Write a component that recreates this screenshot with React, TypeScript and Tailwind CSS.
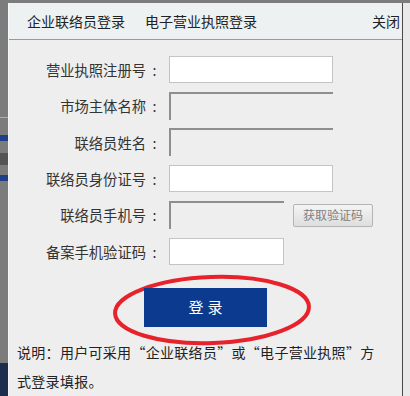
import React from "react";

const font = { fontFamily: '"Noto Sans CJK SC", "Noto Sans", sans-serif' };

function Label({ children }: { children: React.ReactNode }) {
  return (
    <div className="w-[154px] shrink-0 flex justify-end items-center text-[14.3px] text-[#333]">
      <span>{children}</span>
      <span className="w-[17px] text-center">:</span>
    </div>
  );
}

function TextInput({ w }: { w: string }) {
  return <div className={`h-[27px] ${w} bg-white border border-[#c4c4c4]`} />;
}

function DisabledInput({ w }: { w: string }) {
  return (
    <div
      className={`h-[28px] ${w} bg-[#eeeeee] border-t-2 border-l-2 border-r-0 border-b-0 border-[#8e8e8e]`}
    />
  );
}

export default function App() {
  return (
    <div className="w-[410px] h-[396px] bg-[#7c7c7c] flex flex-col overflow-hidden" style={font}>
      <div className="h-[3px] shrink-0 bg-[#7c7c7c]" />
      <div className="flex flex-1 min-h-0">
        {/* background strip */}
        <div className="w-[8px] shrink-0 flex flex-col bg-[#7c7c7c]">
          <div className="h-[106px]" />
          <div className="h-[9px] border-b border-[#9fb0d0]" />
          <div className="h-[17px]" />
          <div className="h-[6px] bg-[#1f3f8a]" />
          <div className="h-[12px]" />
          <div className="h-[12px] bg-[#3a3a3a] opacity-60" />
          <div className="h-[10px]" />
          <div className="h-[6px] bg-[#1f3f8a]" />
          <div className="flex-1" />
          <div className="h-[33px] bg-[#1d2d4d]" />
        </div>
        {/* dialog */}
        <div className="w-[395px] shrink-0 flex flex-col bg-[#eeeeee] border-l border-l-[#f8f8f8] border-r border-r-[#4a4a4a]">
          <div className="h-[37px] shrink-0 flex items-center bg-[#eef1f1] border-b border-b-[#9a9a9a] pl-[18px] pr-[2px] text-[14px] text-[#222]">
            <span>企业联络员登录</span>
            <span className="ml-[20px]">电子营业执照登录</span>
            <span className="ml-auto">关闭</span>
          </div>
          <div className="flex flex-col pt-[16px] gap-[9.4px]">
            <div className="flex items-center h-[27px]">
              <Label>营业执照注册号</Label>
              <div className="w-[6px]" />
              <TextInput w="w-[164px]" />
            </div>
            <div className="flex items-center h-[27px]">
              <Label>市场主体名称</Label>
              <div className="w-[6px]" />
              <DisabledInput w="w-[164px]" />
            </div>
            <div className="flex items-center h-[27px]">
              <Label>联络员姓名</Label>
              <div className="w-[6px]" />
              <DisabledInput w="w-[164px]" />
            </div>
            <div className="flex items-center h-[27px]">
              <Label>联络员身份证号</Label>
              <div className="w-[6px]" />
              <TextInput w="w-[164px]" />
            </div>
            <div className="flex items-center h-[27px]">
              <Label>联络员手机号</Label>
              <div className="w-[6px]" />
              <DisabledInput w="w-[115px]" />
              <div className="ml-[9px] w-[80px] h-[23px] rounded-[2px] border border-[#b4b4b4] bg-gradient-to-b from-[#f4f4f4] to-[#dedede] flex items-center justify-center text-[12px] text-[#808080]">
                获取验证码
              </div>
            </div>
            <div className="flex items-center h-[27px]">
              <Label>备案手机验证码</Label>
              <div className="w-[6px]" />
              <TextInput w="w-[115px]" />
            </div>
          </div>
          <div className="relative flex justify-center pt-[23px]">
            <svg
              className="absolute left-[102px] top-[8px]"
              width="204"
              height="74"
              viewBox="0 0 204 74"
            >
              <ellipse
                cx="101"
                cy="37"
                rx="97"
                ry="33"
                fill="none"
                stroke="#e8222b"
                strokeWidth="4"
                transform="rotate(-2 101 37)"
              />
            </svg>
            <div className="relative w-[123px] h-[39px] bg-[#0b3a8e] flex items-center justify-center text-white text-[15px] tracking-[4px] pl-[4px]">
              登录
            </div>
          </div>
          <div className="pl-[8px] pt-[11px] text-[14px] leading-[29px] text-[#222] tracking-[0.3px]">
            说明：用户可采用“企业联络员”或“电子营业执照”方
            <br />
            式登录填报。
          </div>
        </div>
        <div className="flex-1 bg-[#e9e9e9]" />
      </div>
    </div>
  );
}
